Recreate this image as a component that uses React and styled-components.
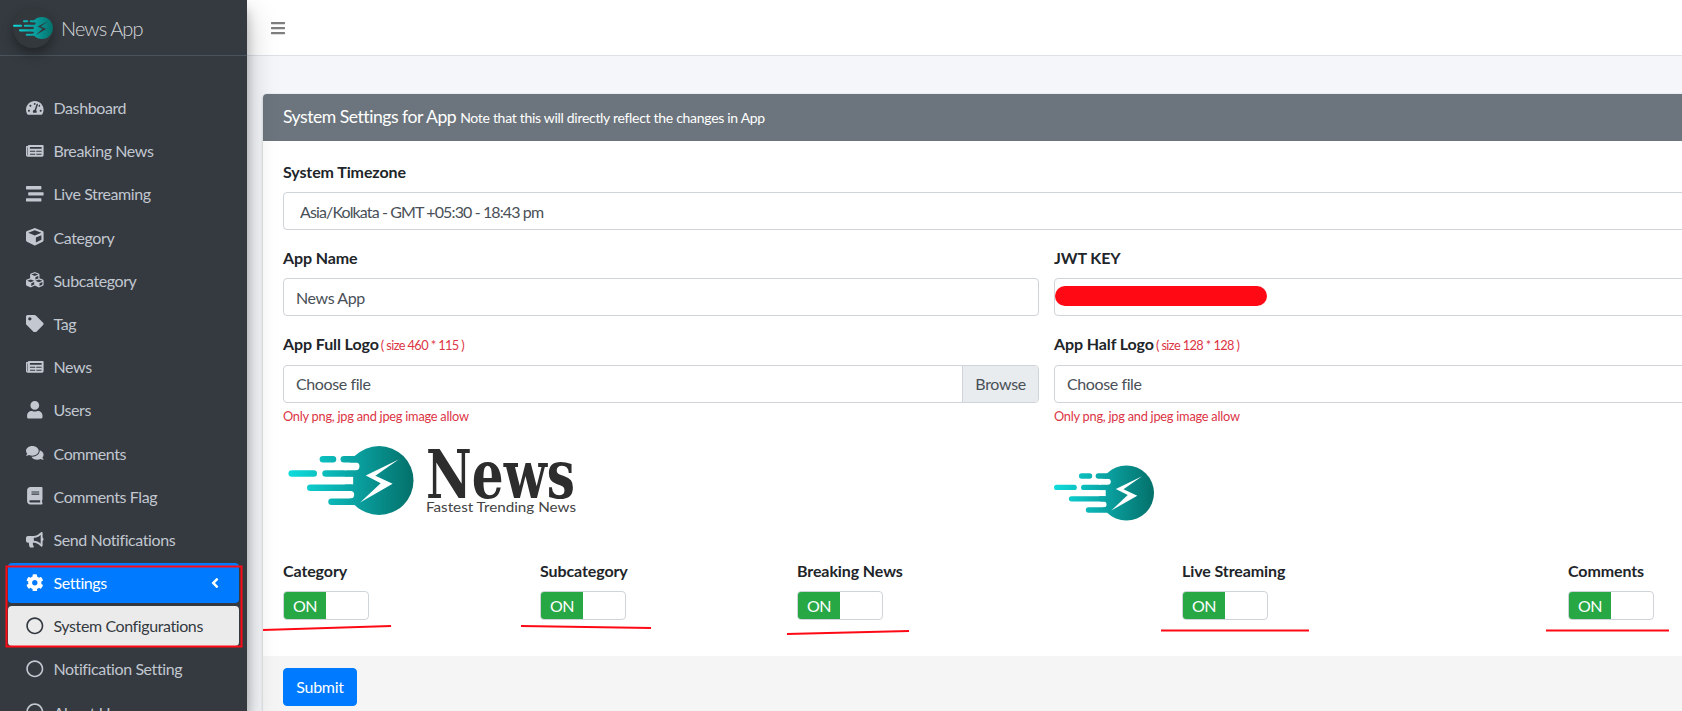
import React from 'react'
import styled, { createGlobalStyle } from 'styled-components'
import {
  FaTachometerAlt,
  FaNewspaper,
  FaStream,
  FaCube,
  FaCubes,
  FaTag,
  FaUser,
  FaComments,
  FaBook,
  FaBullhorn,
  FaCog,
  FaAngleLeft,
  FaBars,
  FaRegCircle,
} from 'react-icons/fa'

const FONT = '"Lato", "Open Sans", "Liberation Sans", sans-serif'

const GlobalStyle = createGlobalStyle`
  html, body {
    margin: 0;
    height: 100%;
    overflow: hidden;
  }
  body {
    font-family: ${FONT};
    font-size: 16px;
    line-height: 24px;
    letter-spacing: -0.3px;
    color: #212529;
    background: #f4f6f9;
  }
  * {
    box-sizing: border-box;
  }
`

const Shell = styled.div`
  position: relative;
  display: flex;
  width: 1682px;
  height: 711px;
  overflow: hidden;
`

const Sidebar = styled.aside`
  flex: 0 0 247px;
  height: 711px;
  background: #343a40;
  overflow: hidden;
  position: relative;
  z-index: 2;
  box-shadow: 0 14px 28px rgba(0, 0, 0, 0.25), 0 10px 10px rgba(0, 0, 0, 0.22);
`

const Brand = styled.div`
  display: flex;
  align-items: center;
  height: 56px;
  padding-left: 13px;
  border-bottom: 1px solid #4b545c;
`

const BrandBadge = styled.div`
  display: flex;
  align-items: center;
  justify-content: center;
  width: 40px;
  height: 40px;
  border-radius: 50%;
  background: #33383d;
  box-shadow: 0 6px 12px rgba(0, 0, 0, 0.35);
`

const BrandName = styled.span`
  margin-left: 8px;
  font-size: 20px;
  font-weight: 300;
  letter-spacing: -0.9px;
  color: rgba(255, 255, 255, 0.8);
`

const Nav = styled.nav`
  padding-top: 31.5px;
`

const NavItem = styled.div`
  display: flex;
  align-items: center;
  height: 40px;
  margin: 0 8px 3.2px;
  padding: 0 16px;
  border-radius: 4px;
  color: ${(p) => (p.$variant === 'open' ? '#fff' : p.$variant === 'current' ? '#343a40' : '#c2c7d0')};
  background: ${(p) =>
    p.$variant === 'open' ? '#007bff' : p.$variant === 'current' ? 'rgba(255,255,255,.9)' : 'transparent'};
`

const NavIcon = styled.span`
  display: flex;
  justify-content: center;
  flex: 0 0 22px;
  margin-right: 7.5px;
  font-size: 17.6px;
`

const NavLabel = styled.span`
  flex: 1;
  white-space: nowrap;
  letter-spacing: -0.4px;
  padding-top: 1px;
`

const Main = styled.div`
  flex: 1;
  min-width: 0;
  overflow: hidden;
`

const TopBar = styled.header`
  display: flex;
  align-items: center;
  height: 56px;
  padding-left: 23px;
  background: #fff;
  border-bottom: 1px solid #dee2e6;
  color: rgba(0, 0, 0, 0.5);
  font-size: 16px;
`

const Content = styled.main`
  padding: 38px 0 0 16px;
`

const Card = styled.section`
  width: 1550px;
  border-radius: 4px 4px 0 0;
  background: #fff;
  box-shadow: 0 0 1px rgba(0, 0, 0, 0.125), 0 1px 3px rgba(0, 0, 0, 0.2);
`

const CardHeader = styled.div`
  display: flex;
  align-items: baseline;
  gap: 4px;
  height: 47px;
  padding: 11px 20px 0;
  border-radius: 4px 4px 0 0;
  background: #6c757d;
  color: #fff;
`

const CardTitle = styled.h3`
  margin: 0;
  font-size: 17.6px;
  font-weight: 400;
  letter-spacing: -0.48px;
`

const CardNote = styled.small`
  font-size: 14px;
  letter-spacing: -0.3px;
`

const CardBody = styled.div`
  padding: 19px 20px 20px;
`

const Group = styled.div`
  margin-bottom: 16px;
`

const Row = styled.div`
  display: grid;
  grid-template-columns: ${(p) => p.$cols};
  margin: 0 -15px;
`

const Col = styled.div`
  padding: 0 ${(p) => (p.$flush ? '0' : '15px')} 0 15px;
  min-width: 0;
`

const Label = styled.label`
  display: block;
  margin-bottom: 8px;
  font-weight: 700;
  letter-spacing: -0.1px;
`

const SizeHint = styled.small`
  margin-left: 2px;
  font-size: 12.8px;
  font-weight: 400;
  letter-spacing: -0.6px;
  color: #dc3545;
`

const TextInput = styled.input`
  display: block;
  width: 100%;
  height: 38px;
  padding: 6px ${(p) => (p.$select ? '16px' : '12px')};
  border: 1px solid #ced4da;
  border-radius: 4px;
  background: #fff;
  color: #495057;
  font: inherit;
  letter-spacing: ${(p) => (p.$select ? '-0.88px' : '-0.4px')};
`

const FieldWrap = styled.div`
  position: relative;
`

const Redaction = styled.span`
  position: absolute;
  left: 1px;
  top: 8px;
  width: 212px;
  height: 20px;
  border-radius: 10px;
  background: #ff0a14;
`

const FileField = styled.div`
  display: flex;
  align-items: stretch;
  height: 38px;
  border: 1px solid #ced4da;
  border-radius: 4px;
  color: #495057;
  overflow: hidden;
`

const FileName = styled.span`
  flex: 1;
  padding: 6px 12px;
  letter-spacing: -0.4px;
`

const Browse = styled.span`
  padding: 6px 12px;
  background: #e9ecef;
  border-left: 1px solid #ced4da;
`

const ErrorText = styled.small`
  display: block;
  margin-top: 4px;
  font-size: 12.8px;
  line-height: 19px;
  letter-spacing: -0.25px;
  color: #dc3545;
`

const LogoSlot = styled.div`
  height: ${(p) => p.$height}px;
  padding: ${(p) => p.$top}px 0 0 ${(p) => p.$left}px;
`

const FullLogo = styled.div`
  display: flex;
  align-items: flex-start;
`

const Wordmark = styled.svg`
  display: block;
  margin-left: 6px;
  overflow: visible;
`

const Toggle = styled.div`
  display: flex;
  width: 86px;
  height: 29px;
  border: 1px solid #ced4da;
  border-radius: 4px;
  overflow: hidden;
  background: #fff;
`

const ToggleOn = styled.span`
  width: 42px;
  background: #28a745;
  color: #fff;
  text-align: center;
  line-height: 27px;
  letter-spacing: -0.6px;
`

const CardFooter = styled.div`
  padding: 12px 20px;
  height: 60px;
  background: #f5f5f5;
`

const SubmitButton = styled.button`
  height: 38px;
  width: 74px;
  padding: 0;
  border: 1px solid #007bff;
  border-radius: 4px;
  background: #007bff;
  color: #fff;
  font: inherit;
  letter-spacing: -0.3px;
`

const Annotations = styled.svg`
  position: absolute;
  inset: 0;
  z-index: 5;
  pointer-events: none;
`

const navItems = [
  ['Dashboard', FaTachometerAlt],
  ['Breaking News', FaNewspaper],
  ['Live Streaming', FaStream],
  ['Category', FaCube],
  ['Subcategory', FaCubes],
  ['Tag', FaTag],
  ['News', FaNewspaper],
  ['Users', FaUser],
  ['Comments', FaComments],
  ['Comments Flag', FaBook],
  ['Send Notifications', FaBullhorn],
  ['Settings', FaCog, 'open'],
  ['System Configurations', FaRegCircle, 'current'],
  ['Notification Setting', FaRegCircle],
  ['About Us', FaRegCircle],
]

const toggles = ['Category', 'Subcategory', 'Breaking News', 'Live Streaming', 'Comments']

// the bolt logo, coordinates read off the reference at 3x
// the logo file is transparent, so gaps and bolt take the colour behind it
const BoltMark = ({ id, width, height, behind = '#fff' }) => (
  <svg width={width} height={height} viewBox="8 14 377 208">
    <defs>
      <linearGradient id={id} gradientUnits="userSpaceOnUse" x1="8" y1="0" x2="385" y2="0">
        <stop offset="0" stopColor="#0fdcdc" />
        <stop offset="0.5" stopColor="#0aa5a5" />
        <stop offset="1" stopColor="#04706a" />
      </linearGradient>
    </defs>
    <circle cx="281" cy="118" r="104" fill={`url(#${id})`} />
    <rect x="160" y="64" width="62" height="23" rx="11" fill={behind} />
    <rect x="165" y="107" width="38" height="23" fill={behind} />
    <rect x="170" y="150" width="36" height="22" rx="11" fill={behind} />
    <rect x="102" y="44" width="50" height="20" rx="10" fill={`url(#${id})`} />
    <rect x="165" y="44" width="57" height="20" rx="10" fill={`url(#${id})`} />
    <rect x="8" y="87" width="86" height="20" rx="10" fill={`url(#${id})`} />
    <rect x="110" y="87" width="76" height="20" rx="10" fill={`url(#${id})`} />
    <rect x="64" y="130" width="144" height="20" rx="10" fill={`url(#${id})`} />
    <rect x="128" y="172" width="86" height="20" rx="10" fill={`url(#${id})`} />
    <polygon points="340,55 241,103 286,126 224,184 322,128 270,104" fill={behind} />
  </svg>
)

export default function App() {
  return (
    <Shell>
      <GlobalStyle />
      <Sidebar>
        <Brand>
          <BrandBadge>
            <BoltMark id="brandGrad" width={40} height={22} behind="#33383d" />
          </BrandBadge>
          <BrandName>News App</BrandName>
        </Brand>
        <Nav>
          {navItems.map(([label, Icon, variant]) => (
            <NavItem key={label} $variant={variant}>
              <NavIcon>
                <Icon />
              </NavIcon>
              <NavLabel>{label}</NavLabel>
              {variant === 'open' && <FaAngleLeft />}
            </NavItem>
          ))}
        </Nav>
      </Sidebar>

      <Main>
        <TopBar>
          <FaBars />
        </TopBar>
        <Content>
          <Card>
            <CardHeader>
              <CardTitle>System Settings for App</CardTitle>
              <CardNote>Note that this will directly reflect the changes in App</CardNote>
            </CardHeader>
            <CardBody>
              <Group>
                <Label>System Timezone</Label>
                <TextInput $select readOnly value="Asia/Kolkata - GMT +05:30 - 18:43 pm" />
              </Group>

              <Row $cols="771px 1fr">
                <Col $flush>
                  <Group>
                    <Label>App Name</Label>
                    <TextInput readOnly value="News App" />
                  </Group>
                </Col>
                <Col>
                  <Group>
                    <Label>JWT KEY</Label>
                    <FieldWrap>
                      <TextInput readOnly value="" />
                      <Redaction />
                    </FieldWrap>
                  </Group>
                </Col>
              </Row>

              <Row $cols="771px 1fr">
                <Col $flush>
                  <Label>
                    App Full Logo<SizeHint>( size 460 * 115 )</SizeHint>
                  </Label>
                  <FileField>
                    <FileName>Choose file</FileName>
                    <Browse>Browse</Browse>
                  </FileField>
                  <ErrorText>Only png, jpg and jpeg image allow</ErrorText>
                  <LogoSlot $height={133} $top={20} $left={5}>
                    <FullLogo>
                      <BoltMark id="fullGrad" width={126} height={69} />
                      <Wordmark width={164} height={76} viewBox="0 0 164 76">
                        <text
                          x="6"
                          y="52"
                          fontFamily="DejaVu Serif, Liberation Serif, serif"
                          fontWeight="700"
                          fontSize="68"
                          letterSpacing="0"
                          fill="#2d2d2d"
                          textLength="149"
                          lengthAdjust="spacingAndGlyphs"
                        >
                          News
                        </text>
                        <text
                          x="6"
                          y="65.5"
                          fontFamily="Lato, sans-serif"
                          fontSize="13.5"
                          letterSpacing="0"
                          fill="#444"
                          textLength="150"
                          lengthAdjust="spacingAndGlyphs"
                        >
                          Fastest Trending News
                        </text>
                      </Wordmark>
                    </FullLogo>
                  </LogoSlot>
                </Col>
                <Col>
                  <Label>
                    App Half Logo<SizeHint>( size 128 * 128 )</SizeHint>
                  </Label>
                  <FileField>
                    <FileName>Choose file</FileName>
                    <Browse>Browse</Browse>
                  </FileField>
                  <ErrorText>Only png, jpg and jpeg image allow</ErrorText>
                  <LogoSlot $height={133} $top={39} $left={0}>
                    <BoltMark id="halfGrad" width={100} height={56} />
                  </LogoSlot>
                </Col>
              </Row>

              <Row $cols="257px 257px 385px 386px 1fr">
                {toggles.map((name) => (
                  <Col key={name}>
                    <Group>
                      <Label>{name}</Label>
                      <Toggle>
                        <ToggleOn>ON</ToggleOn>
                      </Toggle>
                    </Group>
                  </Col>
                ))}
              </Row>
            </CardBody>
            <CardFooter>
              <SubmitButton>Submit</SubmitButton>
            </CardFooter>
          </Card>
        </Content>
      </Main>

      {/* red marks drawn on top of the screenshot */}
      <Annotations width="1682" height="711" viewBox="0 0 1682 711" fill="none" stroke="#ff0a14">
        <rect x="6.5" y="566.5" width="235" height="80" strokeWidth="2" />
        <path d="M263 630 L391 626" strokeWidth="2" />
        <path d="M521 626 L651 628" strokeWidth="2" />
        <path d="M787 634 L909 631" strokeWidth="2" />
        <path d="M1161 630.5 L1309 630.5" strokeWidth="2" />
        <path d="M1546 630.5 L1669 630.5" strokeWidth="2" />
      </Annotations>
    </Shell>
  )
}
